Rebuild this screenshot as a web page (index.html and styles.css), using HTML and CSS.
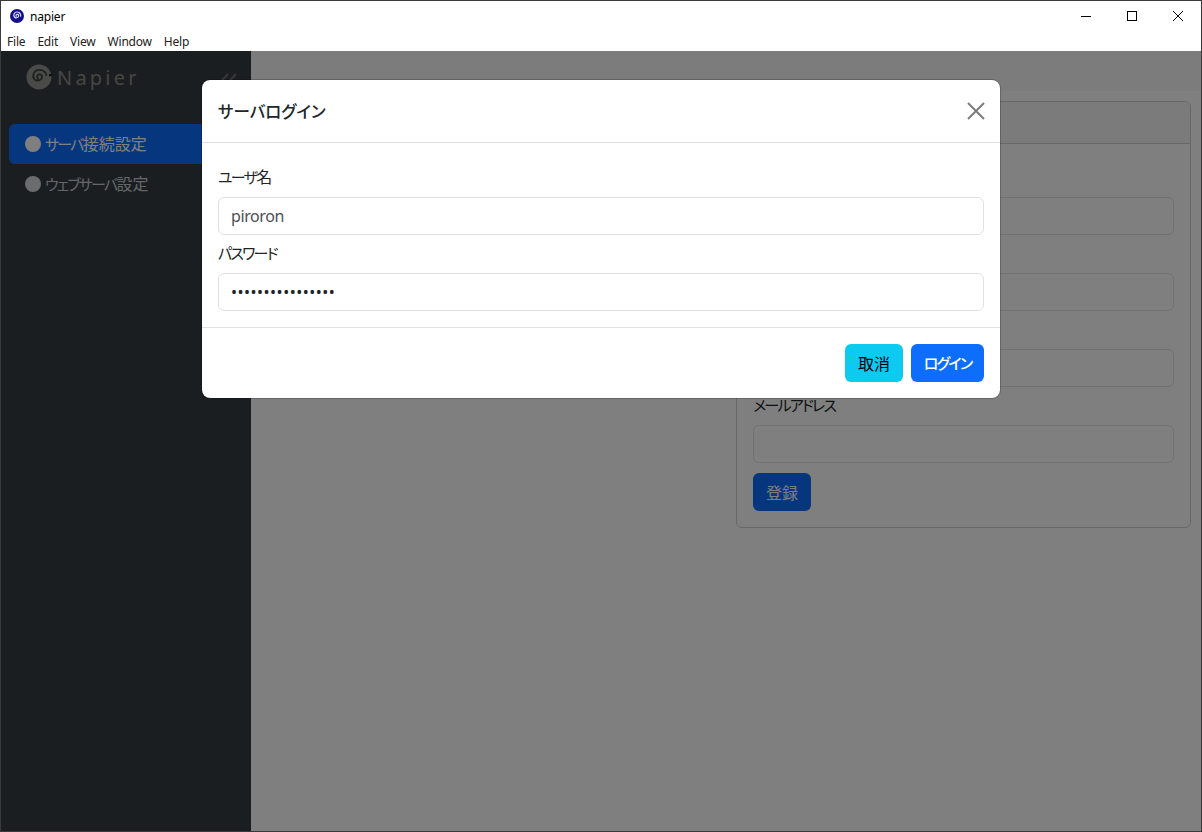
FILE: index.html
```html
<!DOCTYPE html>
<html lang="ja">
<head>
<meta charset="utf-8">
<title>napier</title>
<link rel="stylesheet" href="styles.css">
</head>
<body>
<div class="window">
  <div class="titlebar">
    <svg class="app-icon" viewBox="0 0 16 16" width="16" height="16">
      <circle cx="8" cy="8" r="7" fill="#15108a"/>
      <path d="M7.500 8.600a1.300 1.300 0 1 1 2.100-1.300c.3 2-2.400 3.400-4 1.900C3.900 7.400 5.300 3.700 8.400 4c2.600.2 3.700 2.500 3.100 4.600" fill="none" stroke="#dcdaf2" stroke-width="1.200"/>
    </svg>
    <span class="app-title">napier</span>
    <div class="win-buttons">
      <svg class="win-btn" viewBox="0 0 46 30" width="46" height="30"><path d="M18 15.500h10" stroke="#000" fill="none"/></svg>
      <svg class="win-btn" viewBox="0 0 46 30" width="46" height="30"><rect x="18.500" y="10.500" width="9" height="9" stroke="#000" fill="none"/></svg>
      <svg class="win-btn" viewBox="0 0 46 30" width="46" height="30"><path d="M18 10l10 10M28 10l-10 10" stroke="#000" fill="none"/></svg>
    </div>
  </div>
  <div class="menubar">
    <span>File</span><span>Edit</span><span>View</span><span>Window</span><span>Help</span>
  </div>
  <div class="content">
    <aside class="sidebar">
      <div class="brand">
        <svg class="logo" viewBox="0 0 26 26" width="26" height="26">
          <circle cx="13" cy="13" r="12.500" fill="#959590"/>
          <path d="M12.800 15.200a2.500 2.500 0 1 1 3.300-2.800c.3 3.600-4.600 5.600-7.600 2.900C5.700 12.500 7.500 5.800 13.500 5.800c3.700 0 6.400 2.500 7 6" fill="none" stroke="#3c3e40" stroke-width="1.700"/>
          <path d="M23 10h3v2.200h-3z" fill="#1a1e21"/>
        </svg>
        <span class="brand-name">Napier</span>
        <svg class="collapse" viewBox="0 0 18 18" width="18" height="18">
          <path d="M8 2L1.500 9 8 16M16 2L9.500 9 16 16" fill="none" stroke="#6c6e70" stroke-width="2.200"/>
        </svg>
      </div>
      <nav class="nav">
        <a class="nav-item active"><span class="dot"></span><span class="nav-text"><span class="kana">サーバ</span>接続設定</span></a>
        <a class="nav-item"><span class="dot"></span><span class="nav-text"><span class="kana">ウェブサーバ</span>設定</span></a>
      </nav>
    </aside>
    <main class="main">
      <div class="topbar"></div>
      <div class="page">
        <section class="card">
          <div class="card-header"><span class="kana">サーバ</span>設定</div>
          <div class="card-body">
            <label class="label"><span class="kana">サーバ</span></label>
            <div class="input"></div>
            <label class="label"><span class="kana">ユーザ</span>名</label>
            <div class="input"></div>
            <label class="label"><span class="kana">パスワード</span></label>
            <div class="input"></div>
            <label class="label"><span class="kana">メールアドレス</span></label>
            <div class="input"></div>
            <button class="btn btn-primary reg">登録</button>
          </div>
        </section>
      </div>
    </main>
    <div class="backdrop"></div>
    <div class="modal">
      <div class="modal-header">
        <h5 class="modal-title">サーバログイン</h5>
        <svg class="modal-close" viewBox="0 0 18 18" width="18" height="18">
          <path d="M1 1l16 16M17 1L1 17" fill="none" stroke="#7c7c7c" stroke-width="2"/>
        </svg>
      </div>
      <div class="modal-body">
        <label class="label"><span class="kana">ユーザ</span>名</label>
        <div class="input">piroron</div>
        <label class="label"><span class="kana">パスワード</span></label>
        <div class="input pw">••••••••••••••••</div>
      </div>
      <div class="modal-footer">
        <button class="btn btn-info">取消</button>
        <button class="btn btn-primary btn-kana"><span class="kana">ログイン</span></button>
      </div>
    </div>
  </div>
</div>
</body>
</html>
```

FILE: styles.css
```css
* { box-sizing: border-box; }
html, body { margin: 0; padding: 0; height: 100%; }
body {
  font-family: "Noto Sans", "Noto Sans CJK JP", sans-serif;
  font-size: 16px;
  color: #212529;
  background: #fff;
  font-feature-settings: "palt";
}
.window {
  width: 1202px;
  height: 832px;
  border: 1px solid #3a3a3a;
  display: flex;
  flex-direction: column;
  overflow: hidden;
}
.titlebar {
  height: 30px;
  background: #fff;
  display: flex;
  align-items: center;
  padding-left: 8px;
  flex: none;
}
.app-title { font-size: 12px; margin-left: 5px; color: #000; letter-spacing: -0.2px; }
.win-buttons { margin-left: auto; display: flex; }
.win-btn { display: block; }
.menubar {
  height: 20px;
  background: #fff;
  display: flex;
  align-items: center;
  gap: 12px;
  padding: 0 0 0 6px;
  font-size: 12px;
  letter-spacing: -0.2px;
  color: #222;
  flex: none;
}
.content {
  position: relative;
  flex: 1;
  display: flex;
  min-height: 0;
}
.sidebar {
  width: 250px;
  background: #343c42;
  flex: none;
  padding: 0 8px;
}
.brand {
  display: flex;
  align-items: center;
  height: 52px;
  padding-left: 17px;
}
.logo { flex: none; }
.brand-name {
  margin-left: 5px;
  font-size: 20px;
  letter-spacing: 3.2px;
  color: #8d8d86;
}
.collapse { margin-left: auto; margin-right: 5px; margin-top: 8px; }
.nav { margin-top: 21px; display: flex; flex-direction: column; }
.nav-item {
  display: flex;
  align-items: center;
  height: 40px;
  padding-left: 16px;
  border-radius: 6px;
  font-size: 16px;
}
.nav-text { margin-top: -2px; }
.kana { font-size: 15px; letter-spacing: -1.75px; }
.nav-item:not(.active) { color: #c9ccd0; }
.nav-item.active { background: #0d6efd; color: #fff; }
.dot {
  width: 16px;
  height: 16px;
  border-radius: 50%;
  background: #fff;
  margin-right: 4px;
  flex: none;
}
.nav-item:not(.active) .dot { background: #d4d8dc; }
.main { flex: 1; background: #fff; display: flex; flex-direction: column; }
.topbar { height: 40px; background: #f7f8f7; flex: none; }
.page { padding: 10px 10px 0 485px; }
.card {
  border: 1px solid #d0d0d0;
  border-radius: 6px;
  height: 427px;
  display: flex;
  flex-direction: column;
}
.card-header {
  height: 42px;
  flex: none;
  padding: 8px 16px;
  background: #f7f7f7;
  border-bottom: 1px solid #d0d0d0;
  border-radius: 6px 6px 0 0;
}
.card-body { padding: 15px 16px 16px; }
.label {
  display: block;
  height: 38px;
  line-height: 37px;
  font-size: 16px;
}
.input {
  height: 38px;
  border: 1px solid #dee2e6;
  border-radius: 6px;
  background: #fff;
  padding: 0 12px;
  line-height: 36px;
  color: #495057;
  font-size: 16px;
  letter-spacing: -0.4px;
}
.pw { color: #212529; letter-spacing: 0.5px; }
.btn {
  height: 38px;
  border: 0;
  border-radius: 6px;
  padding: 0 13px;
  font-family: inherit;
  font-feature-settings: inherit;
  font-size: 16px;
}
.btn-kana { width: 73px; padding: 0; font-weight: 500; }
.btn-primary { background: #0d6efd; color: #fff; }
.btn-info { background: #0dcaf0; color: #000; }
.reg { margin-top: 10px; }
.backdrop {
  position: absolute;
  inset: 0;
  background: rgba(0, 0, 0, 0.5);
}
.modal {
  position: absolute;
  left: 200px;
  top: 28px;
  width: 800px;
  height: 320px;
  background: #fff;
  background-clip: padding-box;
  border: 1px solid rgba(0, 0, 0, 0.2);
  border-radius: 9px;
  display: flex;
  flex-direction: column;
}
.modal-header {
  height: 63px;
  flex: none;
  border-bottom: 1px solid #dee2e6;
  display: flex;
  align-items: center;
  justify-content: space-between;
  padding: 0 15px 0 16px;
}
.modal-title {
  margin: 0;
  font-size: 16.500px;
  font-weight: 500;
  color: #212529;
}
.modal-close { display: block; }
.modal-body { padding: 16px; flex: none; }
.modal-footer {
  flex: 1;
  border-top: 1px solid #dee2e6;
  display: flex;
  align-items: center;
  justify-content: flex-end;
  gap: 8px;
  padding: 0 16px;
}
```
